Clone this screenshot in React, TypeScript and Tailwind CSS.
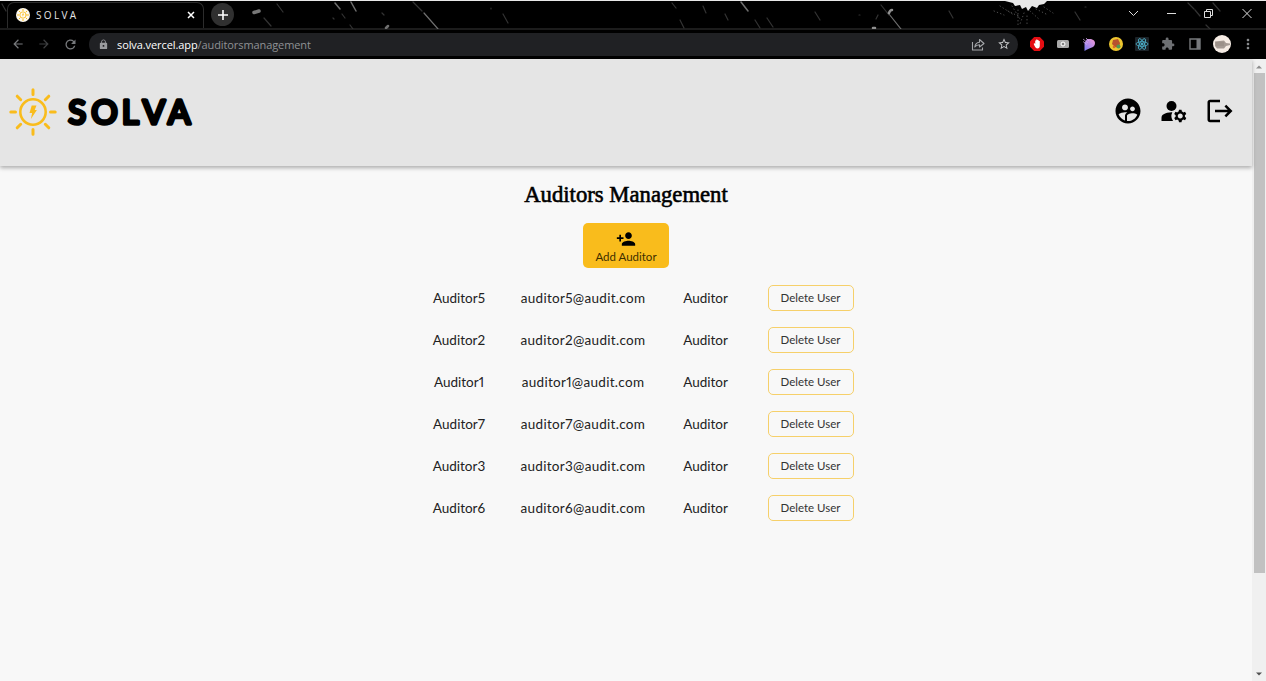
import React from "react";
import {
  MdSupervisedUserCircle,
  MdManageAccounts,
  MdLogout,
  MdPersonAdd,
  MdExtension,
  MdLock,
  MdStarBorder,
  MdArrowBack,
  MdArrowForward,
  MdRefresh,
  MdMoreVert,
} from "react-icons/md";

const ids = [5, 2, 1, 7, 3, 6];

function Sun({ className, stroke = 3 }: { className: string; stroke?: number }) {
  return (
    <svg viewBox="0 0 48 48" className={className} fill="none" stroke="#f9bc1c" strokeWidth={stroke} strokeLinecap="round">
      <circle cx="24" cy="24" r="12.7" strokeWidth={stroke * 0.85} />
      <path d="M24 1.800v4.700M24 41.500v4.700M1.800 24h4.700M41.500 24h4.700M8.200 8.200l3.500 3.500M36.300 36.300l3.500 3.500M8.200 39.800l3.500-3.500M36.300 11.700l3.500-3.500" />
      <path d="M22.700 17.500h4.800l-1.800 4.600h2.200l-6 9 1.200-6.200h-2.600z" fill="#f9bc1c" stroke="none" />
    </svg>
  );
}

function Wallpaper() {
  return (
    <svg className="absolute inset-0 h-[28px] w-full" viewBox="0 0 1266 28" fill="none" strokeLinecap="round">
      <g stroke="#6f6f6f" strokeWidth="1.5">
        <path d="M335 2l5 6M351 1l5 9" />
        <path d="M386 27l2-2" strokeWidth="2.500" />
        <path d="M424 12l14 16M889 13l12 15" strokeWidth="1.2" />
        <path d="M741 1l7 9" />
      </g>
      <g stroke="#333" strokeWidth="1.2">
        <path d="M342 13l3 4M350 24l3 4M413 1l9 9M503 13l5 9M333 17l1 1M382 12l2 2M680 19l4 8M672 2l4 5M703 5l3 7M725 13l3 6M755 19l5 8M767 17l6 9M815 11l5 8M881 4l8 10M949 10l4 7M878 14l-2 4M1075 11l5 8M1188 2l6 6M1195 9l5 6M1213 2l7 8M1206 24l4 4M491 7v1M1085 6h1M859 14h1M277 3l6 8M264 17l7 8M2 3l4 7" />
      </g>
      <path d="M254 11.500l5-1.500" stroke="#777" strokeWidth="3.500" />
      <path d="M889 12q1-3 3-3M873 27h2" stroke="#909090" strokeWidth="2.500" />
      <path d="M1005 0h42l-3 3-5 1-2 3-5-2-4 5-2-4-4 2-2-4-5 1-2-3z" fill="#e8e8e8" />
      <g stroke="#505050" strokeWidth="1" strokeDasharray="0.500 3">
        <path d="M1000 5l14 9M1008 10l12 6M1018 9v15M1024 12l-4 11M1030 10l10 9M1036 8l12 6M1044 6l9 6M1027 15v8M1012 5l8 13M994 10l10 4" />
      </g>
    </svg>
  );
}

function TabStrip() {
  return (
    <div className="relative h-[27px] bg-black">
      <Wallpaper />
      <div className="relative flex h-[27px] items-center">
        <div className="ml-[7px] flex h-[26px] w-[197px] items-center self-end rounded-t-[7px] border border-b-0 border-[#2c2c2c] bg-black pb-[2px] pl-[8px] pr-[8px]">
          <span className="flex size-[14px] items-center justify-center rounded-full bg-[#fffaf0]">
            <Sun className="size-[12px]" stroke={4} />
          </span>
          <span className="ml-[6px] flex-1 font-['Open_Sans',sans-serif] text-[10px] leading-none tracking-[2.350px] text-[#e6e6e6]">SOLVA</span>
          <svg viewBox="0 0 8 8" className="size-[8px]" stroke="#fff" strokeWidth="1.500"><path d="M1 1l6 6M7 1l-6 6" /></svg>
        </div>
        <span className="ml-[7px] flex size-[23px] items-center justify-center rounded-full bg-[#303030]">
          <svg viewBox="0 0 12 12" className="size-[12px]" stroke="#fff" strokeWidth="1.600"><path d="M6 1v10M1 6h10" /></svg>
        </span>
        <svg viewBox="0 0 124 14" className="mb-[4px] ml-auto mr-[14px] h-[14px] w-[124px]" fill="none" stroke="#ddd" strokeWidth="1">
          <path d="M1 5l4.500 4.500L10 5" />
          <path d="M39 7.500h9" />
          <path d="M76.500 5.500h6v6h-6zM78.500 5.500v-2h6v6h-2" />
          <path d="M114.500 3l9 9M123.500 3l-9 9" />
        </svg>
      </div>
    </div>
  );
}

function Extensions() {
  return (
    <div className="flex flex-1 items-center">
      <svg viewBox="0 0 14 14" className="ml-[12px] size-[14px]">
        <path d="M4.200 0h5.600L14 4.200v5.600L9.800 14H4.200L0 9.800V4.200z" fill="#e40d12" />
        <path d="M4.200 6l1 1V3.500h1V2.500h1.200v.6h1.200v.8h1.200V8.500Q9.800 11.500 7.400 11.500 5.500 11.500 3.700 7z" fill="#fff" />
      </svg>
      <svg viewBox="0 0 12 8" className="ml-[13px] h-[8px] w-[12px]">
        <rect width="12" height="8" rx="1.500" fill="#a9a9a9" />
        <circle cx="6" cy="4" r="2" fill="none" stroke="#fff" />
        <circle cx="6" cy="4" r=".8" fill="#555" />
      </svg>
      <svg viewBox="0 0 12 13" className="ml-[14px] h-[13px] w-[12px]">
        <defs><linearGradient id="petal" x1="1" x2="0" y2="1"><stop stopColor="#f39ad8" /><stop offset="1" stopColor="#7a7cf5" /></linearGradient></defs>
        <path d="M4 1H8q4 1 4 4 0 4-4.500 5L4 11.500 1.500 13V5z" fill="url(#petal)" />
        <path d="M0 1l5 4M0 3.500l4 3M3 0l3 3" stroke="#d9b0f0" strokeWidth=".7" />
      </svg>
      <svg viewBox="0 0 14 14" className="ml-[14px] size-[14px]">
        <circle cx="7" cy="7" r="7" fill="#eec62f" />
        <path d="M4 3l5-1 2 4-1 5-4-1-3-3z" fill="#b7522e" />
        <circle cx="9.500" cy="9.500" r="2" fill="#4f9b52" />
        <circle cx="5" cy="10" r="1.300" fill="#dd6a28" />
      </svg>
      <svg viewBox="0 0 14 14" className="ml-[12px] size-[14px]" fill="none" stroke="#4fb7d2" strokeWidth=".8">
        <rect width="14" height="14" rx="1" fill="#1c2328" stroke="none" />
        <ellipse cx="7" cy="7" rx="6" ry="2.300" />
        <ellipse cx="7" cy="7" rx="6" ry="2.300" transform="rotate(60 7 7)" />
        <ellipse cx="7" cy="7" rx="6" ry="2.300" transform="rotate(120 7 7)" />
        <circle cx="7" cy="7" r="1" fill="#4fb7d2" />
      </svg>
      <MdExtension className="ml-[12px] size-[14px] text-[#6d6f72]" />
      <svg viewBox="0 0 12 12" className="ml-[14px] size-[12px]"><path d="M1 1h10v10H1z" fill="none" stroke="#77797c" strokeWidth="1.400" /><path d="M7.500 1H11v10H7.500z" fill="#77797c" /></svg>
      <svg viewBox="0 0 18 18" className="ml-[12px] size-[18px]">
        <circle cx="9" cy="9" r="9" fill="#f6ece4" />
        <path d="M2 6.500l9-1 2 2.500 4 .5v1.500l-4 1-2 2.500H4L2 11z" fill="#a59a93" />
        <path d="M3 8h8M3 10h8" stroke="#83776f" strokeWidth=".5" />
      </svg>
      <MdMoreVert className="ml-[9px] size-[16px] text-[#8b8d90]" />
    </div>
  );
}

function Toolbar() {
  return (
    <div className="flex h-[31px] items-center border-t-2 border-[#1c1c1c] bg-black pb-px">
      <div className="flex w-[89px] items-center gap-[12px] pl-[11px]">
        <MdArrowBack className="size-[14px] text-[#77797c]" />
        <MdArrowForward className="size-[14px] text-[#3f4042]" />
        <MdRefresh className="size-[15px] text-[#77797c]" />
      </div>
      <div className="flex h-[23px] w-[929px] items-center rounded-full bg-[#202124] pl-[9px] pr-[7px]">
        <MdLock className="size-[11px] text-[#9a9b9e]" />
        <div className="ml-[8px] flex-1 font-['Open_Sans',sans-serif] text-[11px] leading-none tracking-[-0.09px] text-[#8f9194]">
          <span className="text-white">solva.vercel.app</span>
          <span>/auditorsmanagement</span>
        </div>
        <svg viewBox="0 0 14 13" className="h-[13px] w-[14px]" fill="none" stroke="#a5a7aa" strokeWidth="1.100" strokeLinejoin="round">
          <path d="M1.500 4v8h10V9.500" />
          <path d="M3.800 9Q4.500 4.500 8.500 4.200V1.500L13 5.500 8.500 9V6.700Q5.500 6.700 3.800 9z" />
        </svg>
        <MdStarBorder className="ml-[12px] size-[14px] text-[#c4c5c7]" />
      </div>
      <Extensions />
    </div>
  );
}

function Header() {
  return (
    <header className="relative flex h-[107px] items-center bg-[#e5e5e5] pb-px pl-[9px] pr-[17px] shadow-[0_2px_4px_rgba(0,0,0,0.3)]">
      <Sun className="size-[48px]" />
      <svg viewBox="0 0 136 60" className="ml-[8px] h-[60px] w-[136px] overflow-visible">
        <text
          x="3.300 26.300 56.800 77.800 103"
          y="42.200"
          className="font-['Lato',sans-serif] text-[33px] font-normal"
          stroke="#000"
          strokeWidth="3.700"
          strokeLinejoin="round"
          strokeLinecap="round"
        >
          SOLVA
        </text>
      </svg>
      <nav className="mb-[2px] ml-auto flex gap-[16px]">
        <MdSupervisedUserCircle className="size-[30px]" />
        <MdManageAccounts className="size-[30px]" />
        <MdLogout className="size-[30px]" />
      </nav>
    </header>
  );
}

function AuditorRow({ id }: { id: number }) {
  return (
    <li className="flex h-[26px] items-center font-['Lato',sans-serif] text-[13.500px] proportional-nums text-[#222]">
      <span className="w-[53px] text-center">Auditor{id}</span>
      <span className="ml-[33px] w-[129px] text-center tracking-[0.300px]">auditor{id}@audit.com</span>
      <span className="ml-[34px] w-[48px] text-center">Auditor</span>
      <button className="ml-[38px] h-[26px] w-[86px] rounded-[5px] border border-[#f6d06a] text-[11.500px] text-[#333]">Delete User</button>
    </li>
  );
}

function Scrollbar() {
  return (
    <div className="flex w-[14px] flex-col items-center bg-[#f0f0f0]">
      <svg viewBox="0 0 14 14" className="h-[14px] w-[14px]"><path d="M4 9.500L7 6.500l3 3z" fill="#8b8b8b" /></svg>
      <div className="h-[500px] w-[11px] bg-[#c1c1c1]" />
      <svg viewBox="0 0 14 14" className="mt-auto h-[14px] w-[14px]"><path d="M4 5.500l3 3 3-3z" fill="#505050" /></svg>
    </div>
  );
}

export default function App() {
  return (
    <div className="flex h-[681px] w-[1266px] flex-col overflow-hidden border-t border-[#e8e8e8] bg-[#f8f8f8]">
      <TabStrip />
      <Toolbar />
      <div className="flex min-h-0 flex-1">
        <div className="flex w-[1252px] flex-col">
          <Header />
          <main className="flex flex-col items-center">
            <h1 className="mt-[14px] h-[30px] whitespace-nowrap font-['Liberation_Serif',serif] text-[22.700px] leading-[30px] text-black [-webkit-text-stroke:0.6px_#000]">
              Auditors Management
            </h1>
            <button className="mt-[13px] flex h-[45px] w-[86px] flex-col items-center rounded-[5px] bg-[#f9bc1c] pt-[6px] font-['Lato',sans-serif] text-[11.500px] text-[#3d2e00]">
              <MdPersonAdd className="size-[20px] text-black" />
              <span className="leading-[15px]">Add Auditor</span>
            </button>
            <ul className="ml-[34px] mt-[17px] flex flex-col gap-[16px]">
              {ids.map((id) => (
                <AuditorRow key={id} id={id} />
              ))}
            </ul>
          </main>
        </div>
        <Scrollbar />
      </div>
    </div>
  );
}
